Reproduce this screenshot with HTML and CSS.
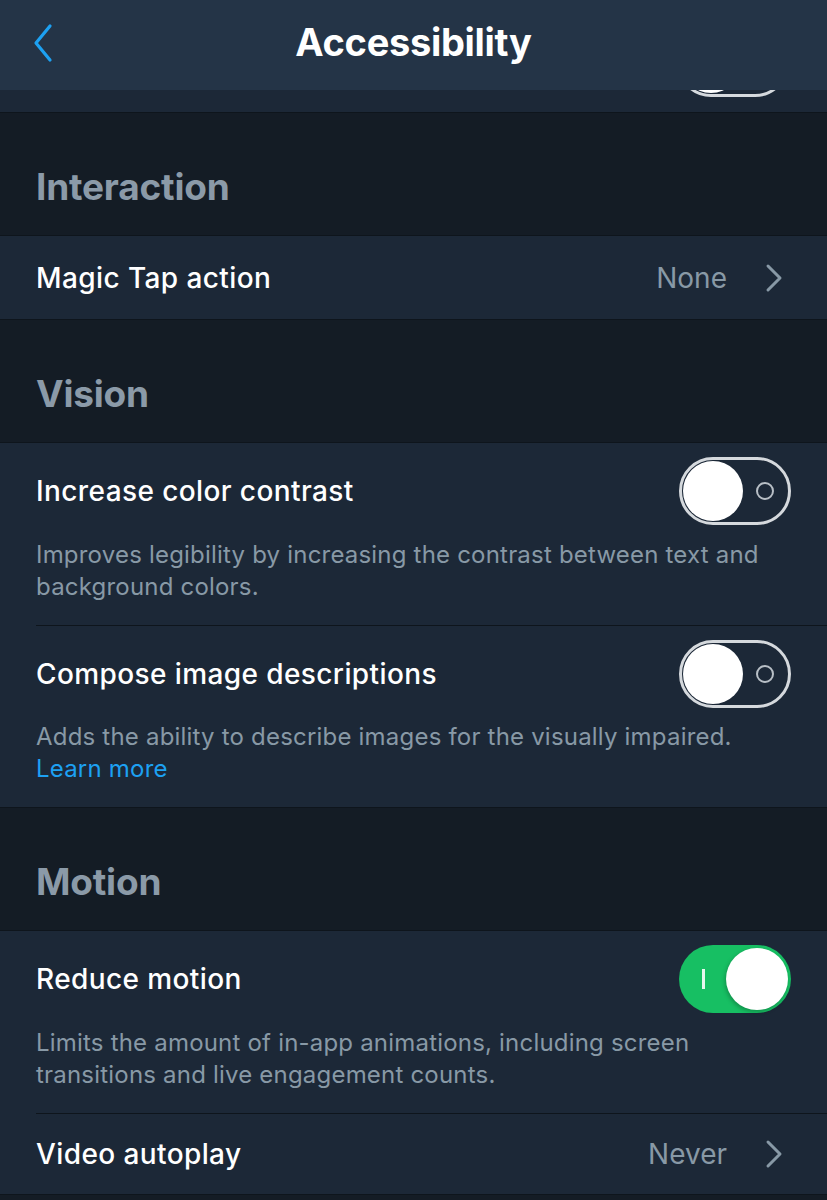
FILE: index.html
```html
<!DOCTYPE html>
<html>
<head>
<meta charset="utf-8">
<link rel="stylesheet" href="styles.css">
</head>
<body>
<div class="screen">
  <header class="nav">
    <svg class="back" width="24" height="40" viewBox="0 0 24 40"><path d="M19 3 L5 20 L19 37" fill="none" stroke="#1da1f2" stroke-width="3.2" stroke-linecap="round" stroke-linejoin="round"/></svg>
    <h1 class="nav-title">Accessibility</h1>
  </header>

  <div class="partial">
    <span class="toggle toggle-off partial-toggle"><span class="knob"></span><span class="ring"></span></span>
  </div>

  <div class="section-head">Interaction</div>
  <div class="group">
    <div class="row link-row">
      <span class="row-title">Magic Tap action</span>
      <span class="row-value">None</span>
      <svg class="chev" width="18" height="30" viewBox="0 0 18 30"><path d="M3 3 L15 15 L3 27" fill="none" stroke="#8899a6" stroke-width="3" stroke-linecap="round" stroke-linejoin="round"/></svg>
    </div>
  </div>

  <div class="section-head">Vision</div>
  <div class="group">
    <div class="cell">
      <div class="cell-main">
        <span class="row-title">Increase color contrast</span>
        <span class="toggle toggle-off"><span class="knob"></span><span class="ring"></span></span>
      </div>
      <p class="desc">Improves legibility by increasing the contrast between text and background colors.</p>
    </div>
    <div class="cell">
      <div class="cell-main">
        <span class="row-title">Compose image descriptions</span>
        <span class="toggle toggle-off"><span class="knob"></span><span class="ring"></span></span>
      </div>
      <p class="desc">Adds the ability to describe images for the visually impaired.<br><a class="learn" href="#">Learn more</a></p>
    </div>
  </div>

  <div class="section-head">Motion</div>
  <div class="group">
    <div class="cell">
      <div class="cell-main">
        <span class="row-title">Reduce motion</span>
        <span class="toggle toggle-on"><span class="bar"></span><span class="knob"></span></span>
      </div>
      <p class="desc">Limits the amount of in-app animations, including screen transitions and live engagement counts.</p>
    </div>
    <div class="row link-row last">
      <span class="row-title">Video autoplay</span>
      <span class="row-value">Never</span>
      <svg class="chev" width="18" height="30" viewBox="0 0 18 30"><path d="M3 3 L15 15 L3 27" fill="none" stroke="#8899a6" stroke-width="3" stroke-linecap="round" stroke-linejoin="round"/></svg>
    </div>
  </div>
  <div class="tail"></div>
</div>
</body>
</html>
```

FILE: styles.css
```css
* { box-sizing: border-box; }
html, body { margin: 0; padding: 0; }
body {
  background: #141c25;
  font-family: Inter, "Noto Sans", "Liberation Sans", sans-serif;
  width: 827px;
  height: 1200px;
  overflow: hidden;
}
.screen { display: flex; flex-direction: column; }

.nav {
  height: 90px;
  background: #243447;
  display: flex;
  align-items: center;
  justify-content: center;
  position: relative;
}
.back { position: absolute; left: 31px; top: 23px; }
.nav-title {
  margin: 0;
  color: #fff;
  font-size: 38px;
  font-weight: 700;
  letter-spacing: -0.3px;
  margin-top: -6px;
}

.partial {
  height: 23px;
  background: #1c2837;
  border-bottom: 1px solid #0e151c;
  overflow: hidden;
  display: flex;
  justify-content: flex-end;
  padding-right: 38px;
}
.partial-toggle { margin-top: -61px; }

.section-head {
  height: 122px;
  padding: 54px 0 0 36px;
  line-height: 40px;
  font-size: 37px;
  font-weight: 700;
  color: #8b9aa8;
  letter-spacing: -0.2px;
}

.group {
  background: #1c2837;
  border-top: 1px solid #0e151c;
  border-bottom: 1px solid #0e151c;
}

.row {
  height: 83px;
  display: flex;
  align-items: center;
  padding: 0 44px 0 36px;
}
.row.last { height: 81px; }
.link-row .row-title { flex: 1; }
.row-title {
  color: #fff;
  font-size: 28px;
  font-weight: 500;
  letter-spacing: 0.4px;
}
.row-value {
  color: #8899a6;
  font-size: 28px;
  margin-right: 38px;
}
.chev { display: block; }

.cell {
  padding-left: 36px;
  position: relative;
}
.cell + .cell .cell-main,
.cell + .row { border-top: 1px solid #0e151c; }
.cell + .row { margin-left: 36px; padding-left: 0; }
.cell-main {
  height: 96px;
  display: flex;
  align-items: center;
  justify-content: space-between;
  padding-right: 36px;
}
.cell + .cell { padding-left: 0; margin-left: 36px; }
.desc {
  margin: 0;
  padding: 0 36px 22px 0;
  color: #8899a6;
  font-size: 24px;
  line-height: 32px;
  letter-spacing: 0.2px;
}
.learn { color: #1da1f2; text-decoration: none; }

.toggle {
  width: 112px;
  height: 68px;
  border-radius: 34px;
  position: relative;
  flex: none;
  display: block;
}
.toggle-off {
  border: 3px solid #d5d9dd;
  background: #1c2837;
}
.toggle-off .knob {
  position: absolute;
  left: 1px;
  top: 1px;
  width: 60px;
  height: 60px;
  border-radius: 50%;
  background: #fff;
}
.toggle-off .ring {
  position: absolute;
  right: 14px;
  top: 22px;
  width: 18px;
  height: 18px;
  border-radius: 50%;
  border: 2.5px solid #b8bfc6;
}
.toggle-on {
  background: #17bf63;
}
.toggle-on .knob {
  position: absolute;
  right: 3px;
  top: 3px;
  width: 62px;
  height: 62px;
  border-radius: 50%;
  background: #fff;
  box-shadow: -1px 2px 4px rgba(0,0,0,0.25);
}
.toggle-on .bar {
  position: absolute;
  left: 23px;
  top: 24px;
  width: 2.5px;
  height: 20px;
  background: #e6f7ed;
}
.tail { flex: 1; }
```
